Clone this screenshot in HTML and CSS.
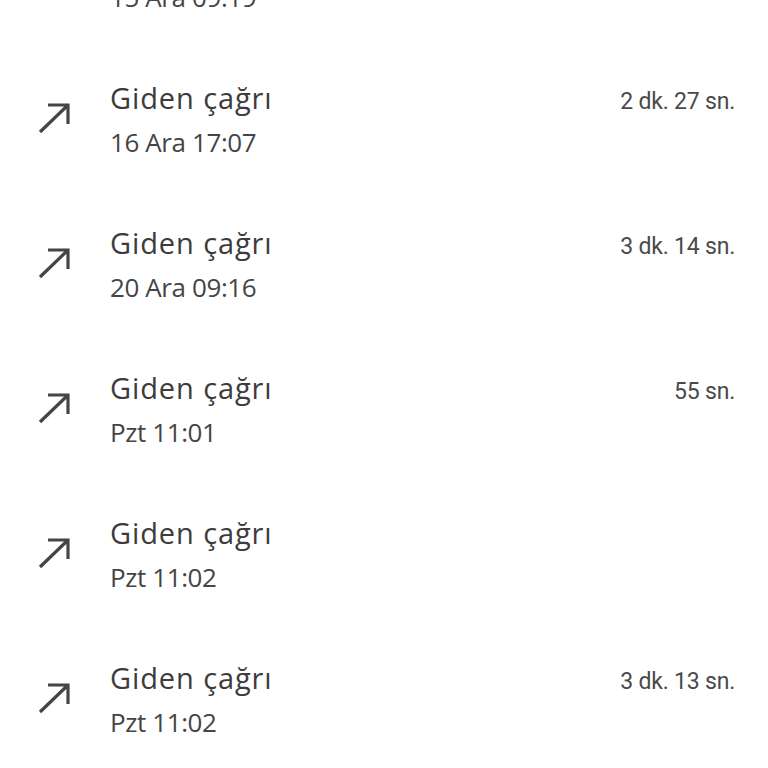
FILE: index.html
```html
<!DOCTYPE html>
<html lang="tr">
<head>
  <meta charset="UTF-8">
  <title>Arama geçmişi</title>
  <link rel="stylesheet" href="styles.css">
</head>
<body>
  <div class="call-list">
    <!-- partly scrolled out of view -->
    <div class="call-row">
      <svg class="call-icon" viewBox="0 0 32 32"><path d="M10 3H30V22M2 30L29 4"/></svg>
      <div class="call-info">
        <div class="call-title">Giden çağrı</div>
        <div class="call-time">15 Ara 09:19</div>
      </div>
      <div class="call-duration"></div>
    </div>

    <div class="call-row">
      <svg class="call-icon" viewBox="0 0 32 32"><path d="M10 3H30V22M2 30L29 4"/></svg>
      <div class="call-info">
        <div class="call-title">Giden çağrı</div>
        <div class="call-time">16 Ara 17:07</div>
      </div>
      <div class="call-duration">2 dk. 27 sn.</div>
    </div>

    <div class="call-row">
      <svg class="call-icon" viewBox="0 0 32 32"><path d="M10 3H30V22M2 30L29 4"/></svg>
      <div class="call-info">
        <div class="call-title">Giden çağrı</div>
        <div class="call-time">20 Ara 09:16</div>
      </div>
      <div class="call-duration">3 dk. 14 sn.</div>
    </div>

    <div class="call-row">
      <svg class="call-icon" viewBox="0 0 32 32"><path d="M10 3H30V22M2 30L29 4"/></svg>
      <div class="call-info">
        <div class="call-title">Giden çağrı</div>
        <div class="call-time">Pzt 11:01</div>
      </div>
      <div class="call-duration">55 sn.</div>
    </div>

    <div class="call-row">
      <svg class="call-icon" viewBox="0 0 32 32"><path d="M10 3H30V22M2 30L29 4"/></svg>
      <div class="call-info">
        <div class="call-title">Giden çağrı</div>
        <div class="call-time">Pzt 11:02</div>
      </div>
      <div class="call-duration"></div>
    </div>

    <div class="call-row">
      <svg class="call-icon" viewBox="0 0 32 32"><path d="M10 3H30V22M2 30L29 4"/></svg>
      <div class="call-info">
        <div class="call-title">Giden çağrı</div>
        <div class="call-time">Pzt 11:02</div>
      </div>
      <div class="call-duration">3 dk. 13 sn.</div>
    </div>
  </div>
</body>
</html>
```

FILE: styles.css
```css
body {
  margin: 0;
  background: #fff;
  font-family: Roboto, "Noto Sans", sans-serif;
  overflow: hidden;
}
.call-list {
  margin-top: -109px;
}
.call-row {
  display: flex;
  align-items: flex-start;
  height: 145px;
  box-sizing: border-box;
  padding: 42px 33px 0 38px;
}
.call-icon {
  width: 32px;
  height: 32px;
  margin-top: 24px;
  margin-right: 40px;
  flex-shrink: 0;
  fill: none;
  stroke: #454545;
  stroke-width: 3.2;
}
.call-info {
  flex: 1;
  font-family: "Open Sans", Roboto, sans-serif;
}
.call-title {
  font-size: 29px;
  line-height: 40px;
  letter-spacing: 0.9px;
  color: #3c3c3c;
}
.call-time {
  font-size: 26px;
  line-height: 44px;
  letter-spacing: -0.4px;
  margin-top: 2px;
  color: #454545;
}
.call-duration {
  font-size: 23px;
  line-height: 40px;
  letter-spacing: -0.2px;
  margin-top: 4px;
  color: #4a4a4a;
}
```
